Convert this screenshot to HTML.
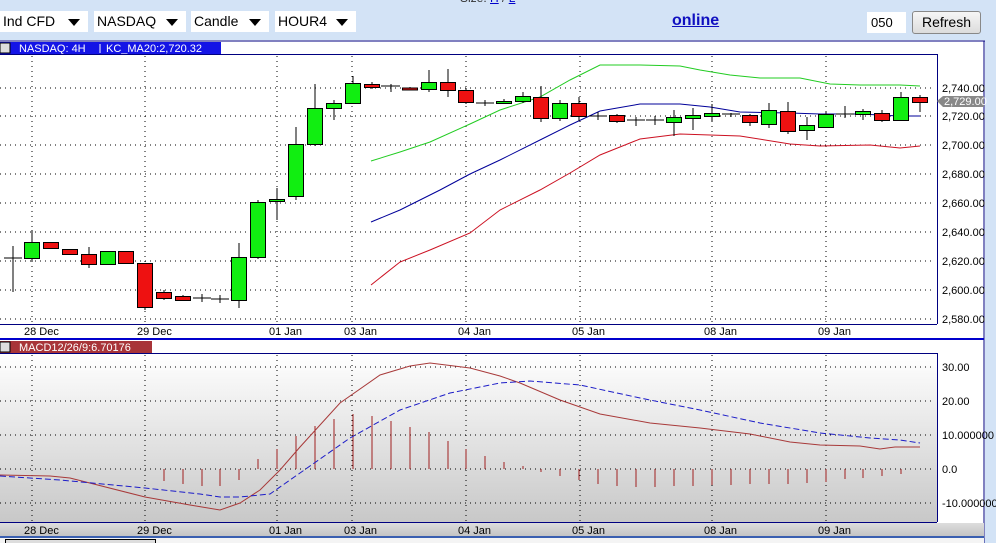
<!DOCTYPE html>
<html><head><meta charset="utf-8"><style>
body{margin:0;width:996px;height:543px;overflow:hidden;background:#d3e3f6;font-family:"Liberation Sans",sans-serif;position:relative}
.dd{position:absolute;top:11px;height:21px;background:#fff;font-size:14px;line-height:21px;padding-left:3px;box-sizing:border-box;color:#000}
.dd b{position:absolute;right:8px;top:8px;border-left:6px solid transparent;border-right:6px solid transparent;border-top:7px solid #000;width:0;height:0}
</style></head><body>
<div class="dd" style="left:0;width:88px">Ind CFD<b></b></div>
<div class="dd" style="left:94px;width:92px">NASDAQ<b></b></div>
<div class="dd" style="left:191px;width:78px">Candle<b></b></div>
<div class="dd" style="left:275px;width:81px">HOUR4<b></b></div>
<div style="position:absolute;left:672px;top:12px;font-size:16px;font-weight:bold;color:#1010c0;text-decoration:underline">online</div>
<div style="position:absolute;left:867px;top:12px;width:39px;height:21px;background:#fff;font-size:13px;line-height:21px;padding-left:4px;box-sizing:border-box">050</div>
<div style="position:absolute;left:912px;top:11px;width:69px;height:23px;background:linear-gradient(#f6f6f6,#dcdcdc);border:1px solid #888;border-radius:3px;box-sizing:border-box;font-size:14px;line-height:21px;text-align:center">Refresh</div>
<div style="position:absolute;left:460px;top:-9px;font-size:12px;color:#333">Size: <u style="color:#00c">H</u> / <u style="color:#00c">L</u></div>
<svg style="position:absolute;left:0;top:0" width="996" height="543" font-family="Liberation Sans, sans-serif">
<defs><linearGradient id="g" x1="0" y1="0" x2="0" y2="1"><stop offset="0" stop-color="#fff"/><stop offset="1" stop-color="#c8c8c8"/></linearGradient>
<linearGradient id="g2" x1="0" y1="0" x2="0" y2="1"><stop offset="0" stop-color="#ddd"/><stop offset="1" stop-color="#c4c4c4"/></linearGradient></defs>
<rect x="0" y="40" width="985" height="498" fill="#fff"/>
<line x1="0" y1="41" x2="985" y2="41" stroke="#000080"/>
<line x1="984" y1="41" x2="984" y2="543" stroke="#000080"/>
<rect x="0" y="42" width="221" height="12" fill="#1414e6"/>
<rect x="0" y="43" width="10" height="10" fill="#ddd" stroke="#000"/>
<text x="19" y="52" font-size="11" fill="#fff">NASDAQ: 4H</text>
<line x1="100" y1="44" x2="100" y2="53" stroke="#fff"/>
<text x="106" y="52" font-size="11" fill="#fff">KC_MA20:2,720.32</text>
<line x1="0" y1="54.5" x2="937" y2="54.5" stroke="#000080"/>
<line x1="937.5" y1="54" x2="937.5" y2="324" stroke="#000080"/>
<g stroke="#000" stroke-dasharray="1,4">
<line x1="0" y1="88" x2="935" y2="88"/><line x1="0" y1="116" x2="935" y2="116"/><line x1="0" y1="145" x2="935" y2="145"/><line x1="0" y1="174" x2="935" y2="174"/><line x1="0" y1="203" x2="935" y2="203"/><line x1="0" y1="232" x2="935" y2="232"/><line x1="0" y1="261" x2="935" y2="261"/><line x1="0" y1="290" x2="935" y2="290"/><line x1="0" y1="319" x2="935" y2="319"/>
<line x1="32" y1="56" x2="32" y2="323"/><line x1="145" y1="56" x2="145" y2="323"/><line x1="277" y1="56" x2="277" y2="323"/><line x1="352" y1="56" x2="352" y2="323"/><line x1="466" y1="56" x2="466" y2="323"/><line x1="580" y1="56" x2="580" y2="323"/><line x1="712" y1="56" x2="712" y2="323"/><line x1="826" y1="56" x2="826" y2="323"/>
</g>
<g font-size="11" fill="#000">
<text x="942" y="92">2,740.00</text><text x="942" y="120">2,720.00</text><text x="942" y="149">2,700.00</text><text x="942" y="178">2,680.00</text><text x="942" y="207">2,660.00</text><text x="942" y="236">2,640.00</text><text x="942" y="265">2,620.00</text><text x="942" y="294">2,600.00</text><text x="942" y="323">2,580.00</text>
</g>
<path d="M937 101 L943 96 H984 V107 H943Z" fill="#888"/><text x="944" y="105" font-size="11" fill="#fff">2,729.00</text>
<polyline fill="none" stroke="#22cc22" points="371,161 400,152 430,142 470,124 500,110 540,97 570,80 600,65 640,65 680,66 700,70 730,75 760,78 800,78 830,84 860,85 900,85 920,86"/>
<polyline fill="none" stroke="#000099" points="371,222 400,210 440,190 470,174 500,160 540,140 570,125 600,111 640,104 680,104 710,107 740,112 790,113 820,114 860,114 900,116 920,116"/>
<polyline fill="none" stroke="#cc1122" points="371,285 400,262 430,250 470,233 500,210 540,190 570,173 600,155 640,139 680,134 710,135 740,136 790,144 820,146 870,145 900,148 920,146"/>
<g stroke="#000" stroke-width="1">
<path d="M13 246V292M4 258H22M32 230V262M89 247V268M145 263V310M164 290V300M183 295V301M193 298H211M202 294V302M211 299H229M220 295V303M239 243V308M258 200V259M277 188V220M296 127V200M315 84V146M334 100V120M353 76V104M372 82V89M381 86H400M391 84V92M410 87V90M429 70V92M448 69V97M466 88V104M476 103H494M485 100V106M504 99V104M523 92V103M541 86V122M560 100V121M579 97V121M589 116H607M598 112V120M617 114V123M627 120H645M636 117V126M646 120H664M655 116V125M674 110V136M693 108V130M712 104V122M722 114H740M731 113V117M750 114V126M769 103V128M788 102V134M807 117V140M826 111V128M836 114H854M845 106V118M863 109V120M882 110V122M901 92V121M920 95V112"/>
</g>
<g stroke="#000">
<rect x="24.5" y="242.5" width="15" height="16" fill="#11ee11"/>
<rect x="43.5" y="242.5" width="15" height="6" fill="#ee1111"/>
<rect x="62.5" y="249.5" width="15" height="5" fill="#ee1111"/>
<rect x="81.5" y="254.5" width="15" height="10" fill="#ee1111"/>
<rect x="100.5" y="251.5" width="15" height="13" fill="#11ee11"/>
<rect x="118.5" y="251.5" width="15" height="12" fill="#ee1111"/>
<rect x="137.5" y="263.5" width="15" height="44" fill="#ee1111"/>
<rect x="156.5" y="292.5" width="15" height="6" fill="#ee1111"/>
<rect x="175.5" y="296.5" width="15" height="4" fill="#ee1111"/>
<rect x="231.5" y="257.5" width="15" height="43" fill="#11ee11"/>
<rect x="250.5" y="202.5" width="15" height="55" fill="#11ee11"/>
<rect x="269.5" y="199.5" width="15" height="2" fill="#11ee11"/>
<rect x="288.5" y="144.5" width="15" height="52" fill="#11ee11"/>
<rect x="307.5" y="108.5" width="15" height="36" fill="#11ee11"/>
<rect x="326.5" y="103.5" width="15" height="5" fill="#11ee11"/>
<rect x="345.5" y="83.5" width="15" height="20" fill="#11ee11"/>
<rect x="364.5" y="84.5" width="15" height="3" fill="#ee1111"/>
<rect x="402.5" y="88" width="15" height="2" fill="#ee1111"/>
<rect x="421.5" y="82.5" width="15" height="7" fill="#11ee11"/>
<rect x="440.5" y="82.5" width="15" height="8" fill="#ee1111"/>
<rect x="458.5" y="90.5" width="15" height="12" fill="#ee1111"/>
<rect x="496.5" y="101.5" width="15" height="2" fill="#11ee11"/>
<rect x="515.5" y="96.5" width="15" height="5" fill="#11ee11"/>
<rect x="533.5" y="97.5" width="15" height="21" fill="#ee1111"/>
<rect x="552.5" y="103.5" width="15" height="15" fill="#11ee11"/>
<rect x="571.5" y="103.5" width="15" height="13" fill="#ee1111"/>
<rect x="609.5" y="115.5" width="15" height="6" fill="#ee1111"/>
<rect x="666.5" y="117.5" width="15" height="5" fill="#11ee11"/>
<rect x="685.5" y="115.5" width="15" height="3" fill="#11ee11"/>
<rect x="704.5" y="113.5" width="15" height="3" fill="#11ee11"/>
<rect x="742.5" y="115.5" width="15" height="7" fill="#ee1111"/>
<rect x="761.5" y="110.5" width="15" height="14" fill="#11ee11"/>
<rect x="780.5" y="111.5" width="15" height="20" fill="#ee1111"/>
<rect x="799.5" y="125.5" width="15" height="5" fill="#11ee11"/>
<rect x="818.5" y="114.5" width="15" height="13" fill="#11ee11"/>
<rect x="855.5" y="111.5" width="15" height="3" fill="#11ee11"/>
<rect x="874.5" y="113.5" width="15" height="7" fill="#ee1111"/>
<rect x="893.5" y="97.5" width="15" height="23" fill="#11ee11"/>
<rect x="912.5" y="97.5" width="15" height="5" fill="#ee1111"/>
</g>
<line x1="0" y1="324.5" x2="937" y2="324.5" stroke="#000080"/>
<g font-size="11" fill="#000"><text x="24" y="335">28 Dec</text><text x="137" y="335">29 Dec</text><text x="269" y="335">01 Jan</text><text x="344" y="335">03 Jan</text><text x="458" y="335">04 Jan</text><text x="572" y="335">05 Jan</text><text x="704" y="335">08 Jan</text><text x="818" y="335">09 Jan</text></g>
<rect x="0" y="338" width="984" height="2" fill="#0000cc"/>
<rect x="0" y="341" width="152" height="12" fill="#a83438"/>
<rect x="0" y="342" width="10" height="10" fill="#ddd" stroke="#000"/>
<text x="19" y="351" font-size="11" fill="#fff">MACD12/26/9:6.70176</text>
<line x1="0" y1="353.5" x2="937" y2="353.5" stroke="#000080"/>
<rect x="0" y="354" width="937" height="168" fill="url(#g)"/>
<line x1="937.5" y1="353" x2="937.5" y2="522" stroke="#000080"/>
<g stroke="#000" stroke-dasharray="1,4">
<line x1="0" y1="367" x2="935" y2="367"/><line x1="0" y1="401" x2="935" y2="401"/><line x1="0" y1="435" x2="935" y2="435"/><line x1="0" y1="469" x2="935" y2="469"/><line x1="0" y1="503" x2="935" y2="503"/>
<line x1="32" y1="355" x2="32" y2="521"/><line x1="145" y1="355" x2="145" y2="521"/><line x1="277" y1="355" x2="277" y2="521"/><line x1="352" y1="355" x2="352" y2="521"/><line x1="466" y1="355" x2="466" y2="521"/><line x1="580" y1="355" x2="580" y2="521"/><line x1="712" y1="355" x2="712" y2="521"/><line x1="826" y1="355" x2="826" y2="521"/>
</g>
<g font-size="11" fill="#000"><text x="942" y="371">30.00</text><text x="942" y="405">20.00</text><text x="942" y="439">10.000000</text><text x="942" y="473">0.0</text><text x="942" y="507">-10.000000</text></g>
<g stroke="#a02020">
<path d="M164 469V481M183 469V484M202 469V486M220 469V486M239 469V480M258 469V459M277 469V449M296 469V436M315 469V426M334 469V419M353 469V414M372 469V416M391 469V421M410 469V427M429 469V432M448 469V441M466 469V449M485 469V456M504 469V462M523 469V466M541 469V472M560 469V476M579 469V480M598 469V484M617 469V486M636 469V487M655 469V487M674 469V486M693 469V486M712 469V485M731 469V485M750 469V484M769 469V484M788 469V484M807 469V483M826 469V482M845 469V479M863 469V478M882 469V476M901 469V474"/>
</g>
<polyline fill="none" stroke="#a83a3a" points="0,475 50,476 70,478 145,497 190,505 220,510 240,503 260,490 280,470 300,447 340,403 380,375 410,366 430,363 470,368 500,376 520,383 560,400 600,414 650,423 700,428 750,434 790,442 820,445 860,446 880,449 895,447 920,447"/>
<polyline fill="none" stroke="#1c1cc8" stroke-dasharray="6,3" points="0,476 60,480 145,488 200,494 220,497 240,497 270,494 300,473 350,438 400,410 450,393 500,383 530,381 580,385 640,398 700,410 760,423 820,433 870,438 900,440 920,443"/>
<line x1="0" y1="522.5" x2="937" y2="522.5" stroke="#000080"/>
<rect x="0" y="523" width="984" height="13" fill="url(#g2)"/>
<g font-size="11" fill="#000"><text x="24" y="534">28 Dec</text><text x="137" y="534">29 Dec</text><text x="269" y="534">01 Jan</text><text x="344" y="534">03 Jan</text><text x="458" y="534">04 Jan</text><text x="572" y="534">05 Jan</text><text x="704" y="534">08 Jan</text><text x="818" y="534">09 Jan</text></g>
<rect x="0" y="536" width="984" height="2" fill="#3a5fb0"/>
<rect x="0" y="538" width="984" height="5" fill="#f4f4f4"/>
<rect x="5.5" y="539.5" width="150" height="6" fill="#ddd" stroke="#000"/>
</svg>
</body></html>
